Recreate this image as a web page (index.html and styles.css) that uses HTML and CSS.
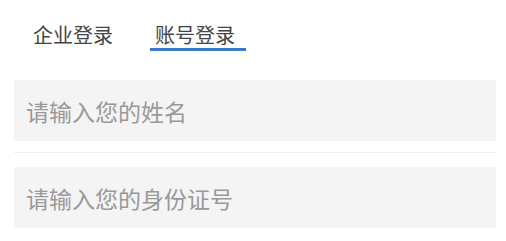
FILE: index.html
```html
<!DOCTYPE html>
<html lang="zh-CN">
<head>
<meta charset="utf-8">
<title>登录</title>
<link rel="stylesheet" href="styles.css">
</head>
<body>
<div class="page">
  <div class="tabs">
    <div class="tab">企业登录</div>
    <div class="tab tab-active">账号登录</div>
  </div>
  <form class="form">
    <input class="field" type="text" placeholder="请输入您的姓名">
    <div class="divider"></div>
    <input class="field" type="text" placeholder="请输入您的身份证号">
  </form>
</div>
</body>
</html>
```

FILE: styles.css
```css
html, body {
  margin: 0;
  padding: 0;
  background: #ffffff;
}
body {
  font-family: "Noto Sans CJK SC", "Noto Sans", sans-serif;
}
.page {
  padding: 0 10px 0 14px;
}
.tabs {
  display: flex;
  align-items: flex-end;
  gap: 37px;
  padding: 25px 0 0 19px;
}
.tab {
  font-size: 20px;
  line-height: 20px;
  color: #444444;
  padding-bottom: 3px;
  border-bottom: 3px solid transparent;
}
.tab-active {
  padding-left: 5px;
  padding-right: 11px;
  border-bottom-color: #3b78c8;
}
.form {
  display: flex;
  flex-direction: column;
  margin: 29px 0 0 0;
}
.field {
  display: block;
  box-sizing: border-box;
  width: 100%;
  height: 61px;
  margin: 0;
  border: none;
  outline: none;
  background: #f4f4f4;
  padding: 0 0 0 12px;
  font-family: "Noto Sans CJK SC", "Noto Sans", sans-serif;
  font-size: 23px;
  color: #333333;
}
.field::placeholder {
  color: #999999;
}
.divider {
  height: 1px;
  background: #f0f0f0;
  margin: 11px 0 14px 0;
}
```
